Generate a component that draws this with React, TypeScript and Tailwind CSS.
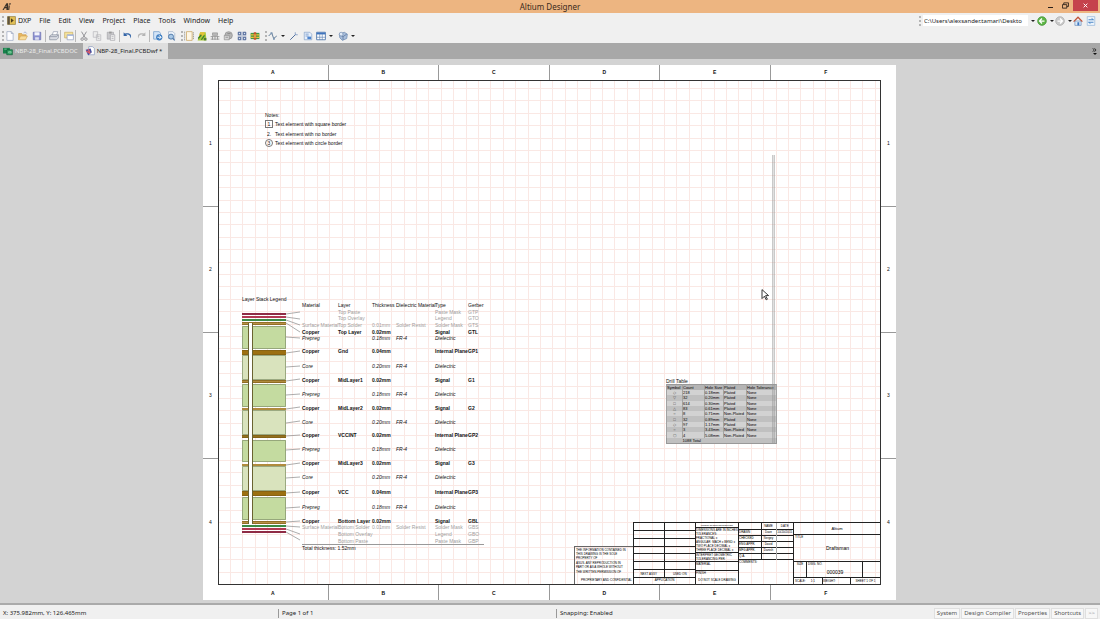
import type { ReactNode } from "react";
import clsx from "clsx";

const MENU = ["DXP", "File", "Edit", "View", "Project", "Place", "Tools", "Window", "Help"];

type IconProps = { children: ReactNode; className?: string };

const Icon = ({ children, className }: IconProps) => (
  <svg viewBox="0 0 16 16" fill="none" className={clsx("shrink-0", className ?? "size-[10px]")} aria-hidden="true">
    {children}
  </svg>
);

const icons: Record<string, ReactNode> = {
  new: <path d="M3 1h7l3 3v11H3zM10 1v3h3" fill="#fdfdff" stroke="#8f9bb8" />,
  open: (
    <>
      <path d="M1 14V4h5l1 2h6v3" fill="#e9b860" stroke="#c99744" />
      <path d="M1 14l3-6h11l-3 6z" fill="#f8dc9a" stroke="#d1a050" />
      <path d="M9 3c2-2 4-1 5 1" stroke="#7a8cc0" />
    </>
  ),
  save: (
    <>
      <path d="M2 2h12v12H2z" fill="#8a8fd0" stroke="#6468ac" />
      <path d="M4 2h8v5H4z" fill="#f2f3fb" />
      <path d="M5 10h6v4H5z" fill="#dcdff0" />
    </>
  ),
  print: (
    <>
      <path d="M5 7l2-6h7l-2 6" fill="#fff" stroke="#8a93a8" />
      <path d="M1 8l3-2h11v5l-3 3H1z" fill="#d8dbe2" stroke="#7d8595" />
      <path d="M1 9h11l3-3" stroke="#7d8595" />
    </>
  ),
  preview: (
    <>
      <path d="M1 2h13v9H1z" fill="#f7e39b" stroke="#c4a95a" />
      <path d="M5 6h10v8H5z" fill="#fff" stroke="#8291b4" />
      <path d="M5 7h10" stroke="#aabbe0" strokeWidth="2" />
    </>
  ),
  cut: (
    <>
      <path d="M4 1l6 10M12 1L6 11" stroke="#8f8f93" strokeWidth="1.5" />
      <circle cx="5" cy="13" r="2" stroke="#8f8f93" strokeWidth="1.5" />
      <circle cx="11" cy="13" r="2" stroke="#8f8f93" strokeWidth="1.5" />
    </>
  ),
  copy: <path d="M2 1h7v9H2zM7 6h7v9H7zM9 9h3M9 12h3" fill="#ececec" stroke="#b1b1b5" />,
  paste: (
    <>
      <path d="M2 2h10v11H2z" fill="#c9c9cc" stroke="#a2a2a6" />
      <path d="M5 1h4v3H5z" fill="#999" />
      <path d="M7 6h7v9H7zM9 9h3M9 12h3" fill="#eee" stroke="#a2a2a6" />
    </>
  ),
  undo: <path d="M1 2v6h6L5 6c4-1 7 1 7 6 3-6-1-10-9-8z" fill="#3566a8" />,
  redo: <path d="M15 2v6H9l2-2c-4-1-7 1-7 6-3-6 1-10 9-8z" fill="#b5b5b5" />,
  compile: (
    <>
      <path d="M1 1h9l2 3v9H1z" fill="#d3e4f7" stroke="#5d8ec4" />
      <circle cx="10" cy="10" r="5" fill="#3f7fc2" />
      <path d="M7 10h6M10 7l3 3-3 3" stroke="#fff" strokeWidth="1.5" />
    </>
  ),
  inspect: (
    <>
      <path d="M4 1h7l3 3v8H4z" fill="#eef4fb" stroke="#94a8c4" />
      <circle cx="8" cy="9" r="4" fill="#a9c8e6" stroke="#4d77a8" strokeWidth="1.5" />
      <path d="M11 12l3 3" stroke="#4d77a8" strokeWidth="2" />
    </>
  ),
  board: (
    <>
      <path d="M4 1h9v14H4z" fill="#fdf6e6" stroke="#c39646" />
      <path d="M1 1v14M15 2v12" stroke="#6f6a5c" strokeDasharray="2 1" />
    </>
  ),
  assembly: (
    <>
      <path d="M1 15L5 2h9l1 13z" fill="#a9c93b" />
      <path d="M5 2h8l-3 6H3z" fill="#e4c23a" />
      <path d="M2 12l5-6M7 14l5-7" stroke="#3b7d2c" strokeWidth="2" />
      <path d="M11 11h4v4h-4z" fill="#4b7a35" />
    </>
  ),
  section: (
    <>
      <path d="M4 3h8v4H4z" fill="#bbb" stroke="#8b8b8b" />
      <path d="M1 9h14M1 13h14M4 8v6M8 8v6M12 8v6" stroke="#999" strokeWidth="1.5" />
    </>
  ),
  detail: (
    <>
      <circle cx="9" cy="7" r="6" fill="#b5b5b5" stroke="#8a8a8a" />
      <path d="M2 7h8v7H2z" fill="#d5d5d5" stroke="#8a8a8a" />
      <path d="M4 10h4M7 4h5" stroke="#777" />
    </>
  ),
  drill: (
    <>
      <path d="M2 2h4v4H2zM10 2h4v4h-4zM2 10h4v4H2zM10 10h4v4h-4z" fill="#dbe4f5" stroke="#3c568c" strokeWidth="1.5" />
      <path d="M8 1v14M1 8h14" stroke="#6c83b3" strokeDasharray="2 1" />
    </>
  ),
  stack: (
    <>
      <path d="M1 3h14v10H1z" fill="#3e9944" />
      <path d="M1 6h14M1 10h14" stroke="#e7c53a" strokeWidth="2" />
      <path d="M6 2h4v12H6z" fill="#c6502c" />
      <path d="M7 5h2v6H7z" fill="#f1c74a" />
    </>
  ),
  polyline: (
    <>
      <path d="M1 8l5-5 3 9 5-4" stroke="#5c7894" strokeWidth="1.5" />
      <path d="M8 11h3v3H8zM4 2h3v3H4z" fill="#7e98b4" />
    </>
  ),
  line: (
    <>
      <path d="M2 14L11 5" stroke="#4b6a9a" strokeWidth="1.5" />
      <path d="M10 2v4h4" stroke="#8ba2c8" strokeWidth="1.5" />
    </>
  ),
  note: (
    <>
      <path d="M2 2h9l3 3v9H2z" fill="#e6effb" stroke="#7c9ac4" />
      <path d="M4 5h5M4 8h5" stroke="#4f79b5" />
      <path d="M7 9h6v4H7z" fill="#4f86cf" />
    </>
  ),
  table: (
    <>
      <path d="M1 2h14v12H1z" fill="#fff" stroke="#5a7fb0" strokeWidth="1.5" />
      <path d="M1 4h14" stroke="#3f74bd" strokeWidth="3" />
      <path d="M1 10h14M6 5v9M10 5v9" stroke="#5a7fb0" />
    </>
  ),
  graphic: (
    <>
      <path d="M2 5l8-3 5 3-1 7-7 3-4-4z" fill="#a9bedb" stroke="#5f7ea8" />
      <path d="M3 6l5 3 6-4M8 9v5" stroke="#48658f" />
      <circle cx="5" cy="5" r="3" fill="#dfe9f6" stroke="#6b87ae" />
    </>
  ),
};

const TOOLS: { id: string; label: string; space: string; menu?: boolean; rule?: boolean }[] = [
  { id: "new", label: "New", space: "" },
  { id: "open", label: "Open", space: "ml-[3px]" },
  { id: "save", label: "Save", space: "ml-[4px]" },
  { id: "print", label: "Print", space: "ml-[3px]", rule: true },
  { id: "preview", label: "Print preview", space: "ml-px", rule: true },
  { id: "cut", label: "Cut", space: "ml-px", rule: true },
  { id: "copy", label: "Copy", space: "ml-[3px]" },
  { id: "paste", label: "Paste", space: "ml-[4px]" },
  { id: "undo", label: "Undo", space: "ml-[3px]", rule: true },
  { id: "redo", label: "Redo", space: "ml-[3px]" },
  { id: "compile", label: "Import changes", space: "ml-[3px]", rule: true },
  { id: "inspect", label: "Cross probe", space: "ml-[3px]" },
];

const VIEW_TOOLS: typeof TOOLS = [
  { id: "board", label: "Board fabrication view", space: "" },
  { id: "assembly", label: "Board assembly view", space: "ml-[3px]" },
  { id: "section", label: "Section view", space: "ml-[3px]" },
  { id: "detail", label: "Detail view", space: "ml-[3px]" },
  { id: "drill", label: "Drill drawing view", space: "ml-[4px]" },
  { id: "stack", label: "Layer stack legend", space: "ml-[3px]" },
];

const DRAW_TOOLS: typeof TOOLS = [
  { id: "polyline", label: "Polyline", space: "", menu: true },
  { id: "line", label: "Line", space: "ml-[4px]" },
  { id: "note", label: "Note", space: "ml-[4px]" },
  { id: "table", label: "Table", space: "ml-[3px]", menu: true },
  { id: "graphic", label: "Graphic", space: "ml-[5px]", menu: true },
];

const Grip = () => <span className="h-[10px] border-l-2 border-dotted border-[#b4b4b4]" />;

const Caret = () => <span className="ml-[3px] border-x-2 border-t-2 border-x-transparent border-t-[#222]" />;

const ToolGroup = ({ tools, label }: { tools: typeof TOOLS; label: string }) => (
  <div role="toolbar" aria-label={label} className="flex items-center">
    {tools.map((t) => (
      <div key={t.id} className={clsx("flex items-center", t.space)}>
        {t.rule && <span className="mr-[3px] h-[12px] w-px bg-[#b9b9b9]" />}
        <button type="button" aria-label={t.label} className="flex items-center">
          <Icon>{icons[t.id]}</Icon>
          {t.menu && <Caret />}
        </button>
      </div>
    ))}
  </div>
);

const TitleBar = () => (
  <header className="grid h-[13px] shrink-0 grid-cols-[1fr_auto_1fr] items-center bg-[#edb581]">
    <Icon className="ml-[2px] h-[9px] w-[10px]">
      <path d="M0 14L7 2h3v12H7v-3H4l-2 3zM5 9h2V6z" fill="#3b3128" fillRule="evenodd" />
      <path d="M11 6h2l-1 8h-2zM12 2h3l-1 3h-2z" fill="#3b3128" />
    </Icon>
    <h1 className="text-[8px] leading-[13px] text-[#3a2a1c]">Altium Designer</h1>
    <div className="flex h-full items-start justify-end">
      <button type="button" aria-label="Minimize" className="flex h-[11px] w-[15px] items-end justify-center pb-[3px]">
        <span className="h-px w-[5px] bg-[#2a2019]" />
      </button>
      <button type="button" aria-label="Restore" className="flex h-[11px] w-[15px] items-center justify-center">
        <Icon className="size-[7px]">
          <path d="M1 6h10v8H1zM4 6V2h11v8h-4" stroke="#2a2019" strokeWidth="2" />
        </Icon>
      </button>
      <button type="button" aria-label="Close" className="mr-[2px] flex h-[11px] w-[25px] items-center justify-center bg-[#c5424c]">
        <Icon className="size-[5px]">
          <path d="M2 2l12 12M14 2L2 14" stroke="#fff" strokeWidth="3" />
        </Icon>
      </button>
    </div>
  </header>
);

const MenuBar = () => (
  <div className="flex h-[15px] shrink-0 items-center justify-between bg-[#f0f0f0] pl-[2px] pr-[4px]">
    <nav className="flex items-center">
      <Grip />
      <Icon className="ml-[3px] size-[9px]">
        <path d="M1 1h14v14H1z" fill="#e2c056" stroke="#7f6a2a" />
        <path d="M1 1h4v14H1z" fill="#5d5340" />
        <path d="M7 4l5 4-5 4z" fill="#4a3d20" />
      </Icon>
      <div className="ml-[2px] flex gap-[8px] text-[7px]">
        {MENU.map((m) => (
          <button key={m} type="button">
            {m}
          </button>
        ))}
      </div>
    </nav>
    <div className="flex items-center">
      <Grip />
      <label className="ml-[2px] flex items-center bg-white">
        <input
          type="text"
          aria-label="Address"
          readOnly
          value="C:\Users\alexsander.tamari\Deskto"
          className="h-[11px] w-[105px] bg-white px-px outline-none"
        />
      </label>
      <button type="button" aria-label="Address history" className="flex h-[11px] items-center pr-[2px]">
        <Caret />
      </button>
      <button type="button" aria-label="Back" className="flex items-center">
        <Icon>
          <circle cx="8" cy="8" r="7" fill="#5cb545" stroke="#3b8a2e" />
          <path d="M12 8H5M8 4L4 8l4 4" stroke="#fff" strokeWidth="2" />
        </Icon>
        <Caret />
      </button>
      <button type="button" aria-label="Forward" className="ml-px flex items-center">
        <Icon>
          <circle cx="8" cy="8" r="7" fill="#c9c9c9" stroke="#a6a6a6" />
          <path d="M4 8h7M8 4l4 4-4 4" stroke="#fff" strokeWidth="2" />
        </Icon>
        <Caret />
      </button>
      <button type="button" aria-label="Home" className="ml-px">
        <Icon>
          <path d="M3 8h10v7H3z" fill="#dce9f8" stroke="#5d84b5" />
          <path d="M1 9l7-7 7 7" stroke="#c05238" strokeWidth="2" />
          <path d="M7 10h3v5H7z" fill="#3d78c2" />
        </Icon>
      </button>
      <button type="button" aria-label="Favorites" className="ml-[3px]">
        <Icon>
          <path d="M2 1h12v14H2z" fill="#eef5fc" stroke="#88aed6" />
          <path d="M4 6h8L9 4M12 10H4l3 2" stroke="#3f7fc2" strokeWidth="1.5" />
        </Icon>
      </button>
    </div>
  </div>
);

const DocTabs = () => (
  <div className="flex h-[16px] shrink-0 items-stretch justify-between bg-[#a8a8a8]">
    <div role="tablist" className="flex">
      <button type="button" role="tab" aria-selected="false" className="flex items-center gap-[2px] pl-[3px] pr-[5px] text-[#ececec]">
        <Icon>
          <path d="M0 3h11v9H0z" fill="#16804a" />
          <path d="M6 6h9v8H6z" fill="#2a9a5d" stroke="#0d5c33" />
          <path d="M2 5h4M9 9h4v2H9z" stroke="#a6e0bd" />
        </Icon>
        NBP-28_Final.PCBDOC
      </button>
      <button type="button" role="tab" aria-selected="true" className="flex items-center gap-[2px] bg-[#dedede] pl-[2px] pr-[6px]">
        <Icon>
          <path d="M6 1h6l3 3v10H6z" fill="#fff" stroke="#7d8fb8" />
          <path d="M1 6l8-2 2 6-6 5z" fill="#4451a0" />
          <path d="M2 8l6 4M5 5l3 6" stroke="#dd5c68" strokeWidth="2" />
        </Icon>
        NBP-28_Final.PCBDwf *
      </button>
    </div>
    <button type="button" aria-label="More tabs" className="flex flex-col items-center justify-center pr-[3px]">
      <Icon className="h-[4px] w-[5px]">
        <path d="M1 1l6 7-6 7M8 1l6 7-6 7" stroke="#111" strokeWidth="3" />
      </Icon>
      <span className="mt-px border-x-2 border-t-2 border-x-transparent border-t-[#111]" />
    </button>
  </div>
);

// Sheet border

const ZoneLetters = ({ bottom }: { bottom?: boolean }) => (
  <div className="col-start-2 grid grid-cols-6 text-[5px] font-bold">
    {["A", "B", "C", "D", "E", "F"].map((z, i) => (
      <span
        key={z}
        className={clsx("flex items-center justify-center border-[#999]", i < 5 && "border-r", bottom ? "pt-px" : "pb-px")}
      >
        {z}
      </span>
    ))}
  </div>
);

const ZoneNumbers = () => (
  <div className="grid grid-rows-4 pt-px text-[5px]">
    {[1, 2, 3, 4].map((z) => (
      <span key={z} className={clsx("flex items-center justify-center border-[#999]", z < 4 && "border-b")}>
        {z}
      </span>
    ))}
  </div>
);

const GRID_PITCH = 12.4;

const SheetGrid = () => (
  <svg className="absolute inset-0 size-full" stroke="#fae8e4" shapeRendering="crispEdges" aria-hidden="true">
    {Array.from({ length: 53 }, (_, i) => {
      const x = Math.round(11 + i * GRID_PITCH) + 0.5;
      return <line key={i} x1={x} x2={x} y1="0" y2="100%" />;
    })}
    {Array.from({ length: 41 }, (_, i) => {
      const y = Math.round(7 + i * GRID_PITCH) + 0.5;
      return <line key={i} y1={y} y2={y} x1="0" x2="100%" />;
    })}
  </svg>
);

const Notes = () => (
  <section className="absolute left-[46px] top-[31px] text-[5px] leading-[6px]">
    <h2>Notes:</h2>
    <ol className="mt-[2px] flex flex-col gap-px">
      <li className="flex items-center gap-[2px]">
        <span className="flex size-[8px] items-center justify-center border border-[#777]">1</span>
        Text element with square border
      </li>
      <li className="flex items-center gap-[2px]">
        <span className="flex h-[9px] w-[8px] items-center justify-center">2.</span>
        Text element with no border
      </li>
      <li className="flex items-center gap-[2px]">
        <span className="flex size-[8px] items-center justify-center rounded-full border border-[#777]">3</span>
        Text element with circle border
      </li>
    </ol>
  </section>
);

// Layer stack legend

type LayerRow = { h: string; kind: "mask" | "copper" | "diel"; cells: string[] };

const LAYERS: LayerRow[] = [
  { h: "h-[6px]", kind: "mask", cells: ["", "Top Paste", "", "", "Paste Mask", "GTP"] },
  { h: "h-[7px]", kind: "mask", cells: ["", "Top Overlay", "", "", "Legend", "GTO"] },
  { h: "h-[7px]", kind: "mask", cells: ["Surface Material", "Top Solder", "0.01mm", "Solder Resist", "Solder Mask", "GTS"] },
  { h: "h-[6px]", kind: "copper", cells: ["Copper", "Top Layer", "0.02mm", "", "Signal", "GTL"] },
  { h: "h-[13px]", kind: "diel", cells: ["Prepreg", "", "0.18mm", "FR-4", "Dielectric", ""] },
  { h: "h-[15px]", kind: "copper", cells: ["Copper", "Gnd", "0.04mm", "", "Internal Plane", "GP1"] },
  { h: "h-[14px]", kind: "diel", cells: ["Core", "", "0.20mm", "FR-4", "Dielectric", ""] },
  { h: "h-[14px]", kind: "copper", cells: ["Copper", "MidLayer1", "0.02mm", "", "Signal", "G1"] },
  { h: "h-[14px]", kind: "diel", cells: ["Prepreg", "", "0.18mm", "FR-4", "Dielectric", ""] },
  { h: "h-[14px]", kind: "copper", cells: ["Copper", "MidLayer2", "0.02mm", "", "Signal", "G2"] },
  { h: "h-[13px]", kind: "diel", cells: ["Core", "", "0.20mm", "FR-4", "Dielectric", ""] },
  { h: "h-[14px]", kind: "copper", cells: ["Copper", "VCCINT", "0.02mm", "", "Internal Plane", "GP2"] },
  { h: "h-[14px]", kind: "diel", cells: ["Prepreg", "", "0.18mm", "FR-4", "Dielectric", ""] },
  { h: "h-[14px]", kind: "copper", cells: ["Copper", "MidLayer3", "0.02mm", "", "Signal", "G3"] },
  { h: "h-[15px]", kind: "diel", cells: ["Core", "", "0.20mm", "FR-4", "Dielectric", ""] },
  { h: "h-[15px]", kind: "copper", cells: ["Copper", "VCC", "0.04mm", "", "Internal Plane", "GP3"] },
  { h: "h-[14px]", kind: "diel", cells: ["Prepreg", "", "0.18mm", "FR-4", "Dielectric", ""] },
  { h: "h-[6px]", kind: "copper", cells: ["Copper", "Bottom Layer", "0.02mm", "", "Signal", "GBL"] },
  { h: "h-[7px]", kind: "mask", cells: ["Surface Material", "Bottom Solder", "0.01mm", "Solder Resist", "Solder Mask", "GBS"] },
  { h: "h-[7px]", kind: "mask", cells: ["", "Bottom Overlay", "", "", "Legend", "GBO"] },
  { h: "h-[6px]", kind: "mask", cells: ["", "Bottom Paste", "", "", "Paste Mask", "GBP"] },
];

// [top, height, fill] of every slab in the cross-section
const SLABS: [number, number, string][] = [
  [3, 2, "#8f2b45"],
  [6, 2, "#b03a52"],
  [9, 2, "#3b8a45"],
  [12, 3, "#b89147"],
  [16, 23, "#c4dba0"],
  [40, 5, "#9c7012"],
  [45, 25, "#d9e3bd"],
  [70, 3, "#b08b3e"],
  [74, 23, "#c4dba0"],
  [98, 2, "#b08b3e"],
  [100, 25, "#d9e3bd"],
  [125, 3, "#93711f"],
  [130, 22, "#c4dba0"],
  [154, 2, "#b08b3e"],
  [156, 25, "#d9e3bd"],
  [181, 5, "#9c7012"],
  [187, 23, "#c4dba0"],
  [211, 3, "#b89147"],
  [215, 2, "#3b8a45"],
  [218, 2, "#b03a52"],
  [221, 2, "#8f2b45"],
];

// [y at the slab, y at the text]
const LEADERS = [
  [4, 2], [7, 9], [10, 15], [13, 22], [27, 28], [43, 41], [57, 56], [71, 69], [85, 84], [99, 97],
  [113, 111], [126, 125], [140, 139], [155, 153], [168, 167], [183, 182], [198, 197], [212, 211],
  [216, 217], [219, 224], [222, 230],
];

const StackDrawing = () => (
  <svg viewBox="0 0 60 234" className="h-[234px] w-[60px] shrink-0" aria-label="Layer stack cross-section">
    {SLABS.map(([y, h, fill]) => (
      <g key={y}>
        <rect x="0" y={y} width="44" height={h} fill={fill} />
        {h > 20 && <path d={`M.5 ${y + 0.5}h43v${h - 1}h-43z`} fill="none" stroke="#8b9a72" strokeOpacity="0.8" />}
        {h < 6 && h > 2 && <path d={`M0 ${y + 0.5}h44M0 ${y + h - 0.5}h44`} stroke="#7a5a14" strokeOpacity="0.6" />}
      </g>
    ))}
    <rect x="6" y="13" width="5" height="201" fill="#fff" />
    <path d="M6.5 13v201M10.5 13v201" stroke="#6a6330" />
    {LEADERS.map(([a, b]) => (
      <path key={a} d={`M44 ${a}L58 ${b}`} stroke="#8a8a8a" strokeWidth="0.7" />
    ))}
  </svg>
);

const LayerStackLegend = () => (
  <section className="absolute left-[23px] top-[215px] text-[5px] leading-[6px]">
    <h2>Layer Stack Legend</h2>
    <div className="flex items-start">
      <div className="pt-[8px]">
        <StackDrawing />
      </div>
      <div>
        <table className="w-[182px] table-fixed border-collapse whitespace-nowrap border-b border-[#999] text-left">
          <colgroup>
            <col className="w-[36px]" />
            <col className="w-[34px]" />
            <col className="w-[24px]" />
            <col className="w-[39px]" />
            <col className="w-[33px]" />
            <col className="w-[16px]" />
          </colgroup>
          <thead>
            <tr className="h-[7px]">
              {["Material", "Layer", "Thickness", "Dielectric Material", "Type", "Gerber"].map((h) => (
                <th key={h} className="p-0 align-top font-normal">
                  {h}
                </th>
              ))}
            </tr>
          </thead>
          <tbody>
            {LAYERS.map((row, i) => (
              <tr
                key={i}
                className={clsx(
                  row.h,
                  row.kind === "mask" && "text-[#a0a0a0]",
                  row.kind === "copper" && "font-bold",
                  row.kind === "diel" && "italic",
                )}
              >
                {row.cells.map((c, j) => (
                  <td key={j} className="p-0 align-top">
                    {c}
                  </td>
                ))}
              </tr>
            ))}
          </tbody>
        </table>
        <p>Total thickness: 1.52mm</p>
      </div>
    </div>
  </section>
);

// Drill table

const DRILLS = [
  ["◇", "218", "0.18mm", "Plated", "None"],
  ["▽", "32", "0.20mm", "Plated", "None"],
  ["□", "614", "0.30mm", "Plated", "None"],
  ["△", "83", "0.61mm", "Plated", "None"],
  ["○", "8", "0.71mm", "Non-Plated", "None"],
  ["□", "32", "0.89mm", "Plated", "None"],
  ["◇", "97", "1.17mm", "Plated", "None"],
  ["○", "3", "3.43mm", "Non-Plated", "None"],
  ["⬡", "4", "5.08mm", "Non-Plated", "None"],
];

const DrillTable = () => (
  <section className="absolute left-[447px] top-[297px]">
    <h2 className="text-[5px] leading-[6px]">Drill Table</h2>
    <table className="h-[60px] w-[110px] table-fixed border-collapse whitespace-nowrap border border-[#999] bg-[#d2d2d2] text-left text-[4px] leading-[5px] text-black">
      <colgroup>
        <col className="w-[16px]" />
        <col className="w-[22px]" />
        <col className="w-[19px]" />
        <col className="w-[23px]" />
        <col className="w-[30px]" />
      </colgroup>
      <thead>
        <tr className="bg-[#b4b4b4]">
          {["Symbol", "Count", "Hole Size", "Plated", "Hole Tolerance"].map((h) => (
            <th key={h} className="border-x border-[#a3a3a3] p-0 font-normal">
              {h}
            </th>
          ))}
        </tr>
      </thead>
      <tbody>
        {DRILLS.map((row, i) => (
          <tr key={i} className="even:bg-[#c0c0c0]">
            {row.map((c, j) => (
              <td key={j} className="border-x border-[#a3a3a3] p-0 first:text-center first:text-[#444]">
                {c}
              </td>
            ))}
          </tr>
        ))}
        <tr className="bg-[#c0c0c0]">
          <td className="p-0" />
          <td className="p-0" colSpan={4}>
            1088 Total
          </td>
        </tr>
      </tbody>
    </table>
  </section>
);

// Title block

const SIGNATURES = [
  ["DRAWN", "Dave", "10/20/2015"],
  ["CHECKED", "Sergey", ""],
  ["ENG APPR.", "David", ""],
  ["MFG APPR.", "Danish", ""],
  ["Q.A.", "", ""],
];

const TitleBlock = () => (
  <section className="absolute bottom-0 right-0 flex items-end text-[3px] leading-[4px] whitespace-nowrap text-black">
    <div className="flex w-[59px] flex-col border-l border-t border-[#666] px-px pt-px">
      <p>THE INFORMATION CONTAINED IN</p>
      <p>THIS DRAWING IS THE SOLE</p>
      <p>PROPERTY OF</p>
      <p className="mt-px">ASUS. ANY REPRODUCTION IN</p>
      <p>PART OR AS A WHOLE WITHOUT</p>
      <p className="mt-px">THE WRITTEN PERMISSION OF</p>
      <p className="mt-[4px] pb-[2px] text-right">PROPRIETARY AND CONFIDENTIAL</p>
    </div>

    <div className="flex h-[62px] border-l border-t border-[#222]">
      <div className="flex w-[62px] flex-col border-r border-[#222] text-center">
        <div className="grid flex-1 grid-cols-2 grid-rows-7">
          {Array.from({ length: 14 }, (_, i) => (
            <span key={i} className={clsx("flex items-center justify-center border-b border-[#222]", i % 2 === 0 && "border-r")}>
              {i === 12 && "NEXT ASSY"}
              {i === 13 && "USED ON"}
            </span>
          ))}
        </div>
        <span className="h-[6px]">APPLICATION</span>
      </div>

      <div className="flex w-[43px] flex-col border-r border-[#222]">
        <p className="border-b border-[#222] text-center text-[2px]">UNLESS OTHERWISE SPECIFIED:</p>
        <div className="h-[25px] border-b border-[#222]">
          <p>DIMENSIONS ARE IN INCHES</p>
          <p>TOLERANCES:</p>
          <p>FRACTIONAL ±</p>
          <p>ANGULAR: MACH ± BEND ±</p>
          <p>TWO PLACE DECIMAL ±</p>
          <p>THREE PLACE DECIMAL ±</p>
        </div>
        <div className="border-b border-[#222]">
          <p>INTERPRET GEOMETRIC</p>
          <p>TOLERANCING PER:</p>
        </div>
        <p className="h-[9px] border-b border-[#222]">MATERIAL</p>
        <p className="flex-1">FINISH</p>
        <p className="h-[6px] text-center">DO NOT SCALE DRAWING</p>
      </div>

      <div className="w-[54px]">
        <table className="w-full table-fixed border-collapse text-left">
          <colgroup>
            <col className="w-[22px]" />
            <col className="w-[15px]" />
            <col className="w-[17px]" />
          </colgroup>
          <thead>
            <tr className="h-[6px] border-b border-[#222]">
              <th className="border-r border-[#222] p-0" />
              <th className="border-r border-[#aaa] p-0 text-center font-normal">NAME</th>
              <th className="p-0 text-center font-normal">DATE</th>
            </tr>
          </thead>
          <tbody>
            {SIGNATURES.map(([role, name, date]) => (
              <tr key={role} className="h-[6px] border-b border-[#222]">
                <th className="border-r border-[#222] p-0 font-normal">{role}</th>
                <td className="border-r border-[#aaa] p-0 text-center">{name}</td>
                <td className="p-0 text-center">{date}</td>
              </tr>
            ))}
          </tbody>
        </table>
        <p>COMMENTS:</p>
      </div>

      <div className="flex w-[87px] flex-col border-l border-[#222]">
        <p className="h-[12px] border-b border-[#222] text-center text-[4px] leading-[11px]">Altium</p>
        <div className="flex flex-1 flex-col border-b border-[#222] pl-px">
          <p>TITLE</p>
          <p className="text-center text-[5px] leading-[18px]">Draftsman</p>
        </div>
        <div className="grid h-[16px] grid-cols-[13px_56px_1fr] border-b border-[#222]">
          <span className="border-r border-[#222] text-center">SIZE</span>
          <div className="border-r border-[#222] pl-px">
            <p>DWG. NO.</p>
            <p className="text-center text-[5px] leading-[12px]">000039</p>
          </div>
          <span />
        </div>
        <div className="grid h-[6px] grid-cols-[29px_28px_1fr] leading-[6px]">
          <span className="flex gap-[5px] border-r border-[#222] pl-px">
            <span>SCALE:</span>
            <span>1:1</span>
          </span>
          <span className="border-r border-[#222]">WEIGHT:</span>
          <span className="text-center">SHEET 1 OF 1</span>
        </div>
      </div>
    </div>
  </section>
);

const Sheet = () => (
  <div className="mx-auto mt-[6px] grid h-[535px] w-[693px] shrink-0 grid-cols-[15px_1fr_15px] grid-rows-[15px_1fr_15px] bg-white font-['Liberation_Sans',Arial,sans-serif] text-[#111]">
    <ZoneLetters />
    <div className="col-start-1 row-start-2 grid">
      <ZoneNumbers />
    </div>
    <div className="relative col-start-2 row-start-2 overflow-hidden border border-[#333]">
      <SheetGrid />
      <Notes />
      <LayerStackLegend />
      <DrillTable />
      <TitleBlock />
      {/* outline of the item being dragged */}
      <div className="absolute left-[553px] top-[74px] h-[288px] w-[3px] border-x border-[#999]/30 bg-[#999]/30" />
      <svg viewBox="0 0 12 20" className="absolute left-[542px] top-[208px] h-[12px] w-[8px]" aria-hidden="true">
        <path d="M1 1v15l4-4 3 6 2-1-3-6h5z" fill="#fff" stroke="#222" strokeWidth="1.5" />
      </svg>
    </div>
    <div className="col-start-3 row-start-2 grid">
      <ZoneNumbers />
    </div>
    <ZoneLetters bottom />
  </div>
);

const StatusBar = () => (
  <footer className="grid h-[14px] shrink-0 grid-cols-[278px_278px_1fr_auto] items-center bg-[#f0f0f0] pt-[2px] pr-[2px]">
    <span className="pl-[3px]">X: 375.982mm, Y: 126.465mm</span>
    <span className="border-l border-[#999] pl-[3px]">Page 1 of 1</span>
    <span className="border-l border-[#999] pl-[3px]">Snapping: Enabled</span>
    <div className="flex gap-px text-[#555]">
      {["System", "Design Compiler", "Properties", "Shortcuts", ">>"].map((p) => (
        <button key={p} type="button" className="h-[11px] border border-[#dfdfdf] bg-[#f7f7f7] px-[2px] leading-[9px] last:text-[#999]">
          {p}
        </button>
      ))}
    </div>
  </footer>
);

export default function App() {
  return (
    <div className="flex h-screen flex-col overflow-hidden bg-[#d3d3d3] font-['Noto_Sans','Open_Sans',sans-serif] text-[6px] leading-[9px] text-[#1c1c1c]">
      <TitleBar />
      <MenuBar />
      <div className="flex h-[15px] shrink-0 items-center bg-[#f0f0f0] pl-[2px]">
        <Grip />
        <div className="ml-px flex items-center gap-[5px]">
          <ToolGroup tools={TOOLS} label="Standard" />
          <div className="flex items-center gap-px">
            <Grip />
            <ToolGroup tools={VIEW_TOOLS} label="Views" />
          </div>
          <div className="flex items-center gap-px">
            <Grip />
            <ToolGroup tools={DRAW_TOOLS} label="Drawing" />
          </div>
        </div>
      </div>
      <DocTabs />
      <main className="flex min-h-0 flex-1 flex-col overflow-hidden border-b-2 border-[#aaa] pr-px">
        <Sheet />
      </main>
      <StatusBar />
    </div>
  );
}
